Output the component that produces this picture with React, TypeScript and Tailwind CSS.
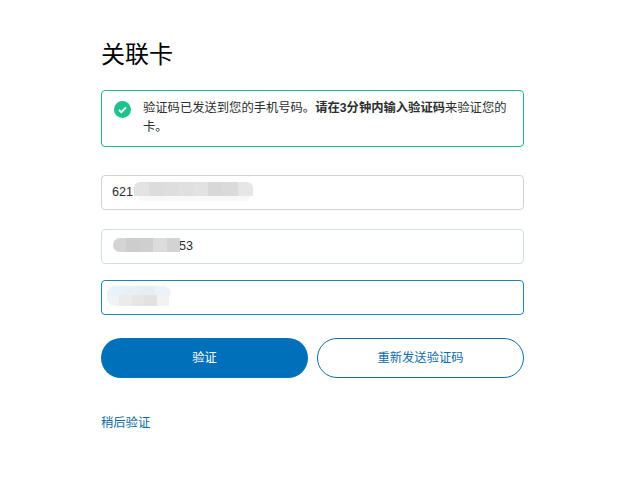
const font = { fontFamily: '"Liberation Sans", "Noto Sans CJK SC", sans-serif' };

// mosaic left over from the screenshot's redaction
function Mosaic({ cells, className }: { cells: string[]; className: string }) {
  return (
    <div className={`absolute flex overflow-hidden ${className}`}>
      {cells.map((c, i) => (
        <div key={i} className="h-full flex-1" style={{ backgroundColor: c }} />
      ))}
    </div>
  );
}

export default function App() {
  return (
    <div style={font} className="min-h-[495px] w-[625px] bg-white pl-[101px] pr-[101px] pt-[37px] text-[#2c2e2f]">
      <h1 className="mb-[18px] text-[24px] leading-[35px] font-normal text-black">关联卡</h1>

      <div className="flex h-[57px] rounded-[4px] border border-[#1fb98c] pl-[12px] pr-[14px] pt-[8px]">
        <svg viewBox="0 0 16 16" className="mt-[2px] h-[17px] w-[17px] shrink-0">
          <circle cx="8" cy="8" r="8" fill="#1cc48b" />
          <path d="M4.6 8.3l2.3 2.2 4.4-4.6" fill="none" stroke="#fff" strokeWidth="1.7" />
        </svg>
        <p className="ml-[12px] text-[12.3px] leading-[19px]">
          验证码已发送到您的手机号码。<b>请在3分钟内输入验证码</b>来验证您的卡。
        </p>
      </div>

      <div className="relative mt-[28px] flex h-[35px] items-center rounded-[4px] border border-[#cfd3d6] pl-[10px] text-[12.6px]">
        621
        <Mosaic
          className="left-[32px] top-[6px] h-[14px] w-[119px] rounded-t-[6px]"
          cells={["#e3e3e3", "#dcdcdc", "#dedede", "#e0e0e0", "#e2e2e2", "#d8d8d8", "#dadada", "#e6e6e6"]}
        />
        <div className="absolute left-[36px] top-[20px] h-[5px] w-[112px] rounded-b-[6px] bg-[#f8f8f8]" />
      </div>

      <div className="relative mt-[19px] flex h-[35px] items-center rounded-[4px] border border-[#d5dde2] pl-[77px] text-[12.6px]">
        53
        <Mosaic
          className="left-[11px] top-[8px] h-[14px] w-[67px] rounded-l-[7px]"
          cells={["#d4d4d4", "#cdcdcd", "#cfcfcf", "#dcdcdc", "#d3d3d3"]}
        />
      </div>

      <div className="relative mt-[16px] h-[35px] rounded-[4px] border border-[#1b87b3]">
        <Mosaic
          className="left-[5px] top-[5px] h-[9px] w-[64px] rounded-t-[8px]"
          cells={["#e8f2f8", "#e6f0f6", "#e4eef4", "#e9f3f8"]}
        />
        <Mosaic
          className="left-[5px] top-[14px] h-[11px] w-[62px] rounded-bl-[8px]"
          cells={["#eef3f6", "#ebebeb", "#e6e6e6", "#e2e2e2", "#f3f2f3"]}
        />
      </div>

      <div className="mt-[23px] grid grid-cols-2 gap-[9px] text-[12.3px]">
        <button className="h-[40px] rounded-full bg-[#0070ba] text-white">验证</button>
        <button className="h-[40px] rounded-full border border-[#0f6eab] bg-white text-[#0f6cab]">
          重新发送验证码
        </button>
      </div>

      <a className="mt-[37px] block text-[12.3px] leading-[17px] text-[#0f6a9e]">稍后验证</a>
    </div>
  );
}
